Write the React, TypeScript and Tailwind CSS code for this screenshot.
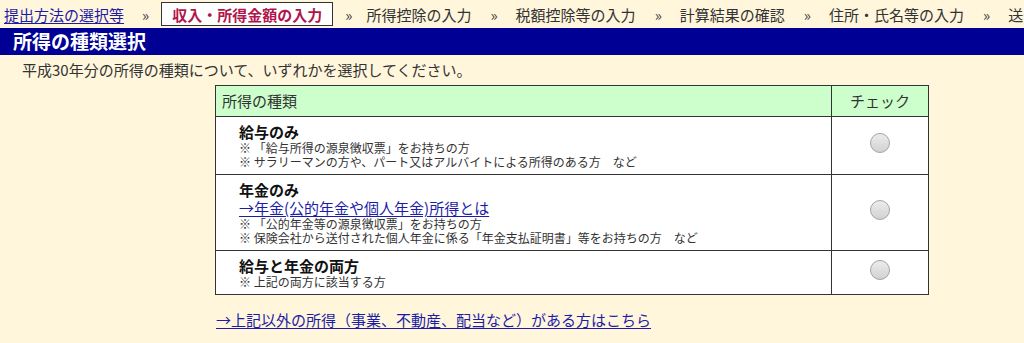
import React from "react";

const steps = ["所得控除の入力", "税額控除等の入力", "計算結果の確認", "住所・氏名等の入力", "送付"];

const rows = [
  {
    title: "給与のみ",
    link: "",
    notes: ["※ 「給与所得の源泉徴収票」をお持ちの方", "※ サラリーマンの方や、パート又はアルバイトによる所得のある方　など"],
  },
  {
    title: "年金のみ",
    link: "→年金(公的年金や個人年金)所得とは",
    notes: ["※ 「公的年金等の源泉徴収票」をお持ちの方", "※ 保険会社から送付された個人年金に係る「年金支払証明書」等をお持ちの方　など"],
  },
  {
    title: "給与と年金の両方",
    link: "",
    notes: ["※ 上記の両方に該当する方"],
  },
];

function Radio() {
  return (
    <span className="inline-block w-[20px] h-[20px] rounded-full border border-[#a4a4a4] bg-gradient-to-b from-[#ececec] to-[#d2d2d2]" />
  );
}

export default function App() {
  return (
    <div
      className="w-[1024px] h-[343px] overflow-hidden bg-[#fff6dc] text-[#222]"
      style={{ fontFamily: '"Noto Sans CJK JP", "Noto Sans", sans-serif' }}
    >
      {/* ステップ表示 */}
      <div className="h-[28px] flex items-center whitespace-nowrap text-[15px] leading-none">
        <a className="ml-[4px] text-[#1c1ca8] underline underline-offset-2">提出方法の選択等</a>
        <span className="ml-[18px] mr-[12px] text-[#444]">»</span>
        <span className="h-[24px] px-[10px] flex items-center bg-white border border-[#333] font-bold text-[#b0164b]">
          収入・所得金額の入力
        </span>
        {steps.map((s, i) => (
          <React.Fragment key={s}>
            <span className={i === 0 ? "ml-[12px] mr-[14px] text-[#444]" : "ml-[19px] mr-[18px] text-[#444]"}>»</span>
            <span className="text-[#333]">{s}</span>
          </React.Fragment>
        ))}
      </div>

      <div className="h-[27px] bg-[#000094] flex items-center pl-[13px] text-white font-bold text-[19px]">
        所得の種類選択
      </div>

      <p className="h-[30px] pt-[6px] pl-[22px] text-[15px] leading-[18px] text-[#333]">
        平成30年分の所得の種類について、いずれかを選択してください。
      </p>

      <table className="ml-[215px] w-[714px] border-collapse border border-[#333] bg-white">
        <thead>
          <tr className="h-[31px] bg-[#ccffcc] text-[15px] text-[#333]">
            <th className="border border-[#333] text-left font-normal pl-[6px]">所得の種類</th>
            <th className="border border-[#333] font-normal w-[97px]">チェック</th>
          </tr>
        </thead>
        <tbody>
          {rows.map((r) => (
            <tr key={r.title}>
              <td className="border border-[#333] pl-[23px] py-[5px]">
                <div className="font-bold text-[15px] leading-[19px] text-[#111]">{r.title}</div>
                {r.link && (
                  <a className="block text-[15px] leading-[18px] text-[#1c1ca8] underline underline-offset-2">{r.link}</a>
                )}
                {r.notes.map((n) => (
                  <div key={n} className="text-[12px] leading-[14px] text-[#333] whitespace-pre">
                    {n}
                  </div>
                ))}
              </td>
              <td className="border border-[#333] text-center align-middle">
                <Radio />
              </td>
            </tr>
          ))}
        </tbody>
      </table>

      <a className="block mt-[16px] ml-[216px] text-[15px] leading-[18px] text-[#1c1ca8] underline underline-offset-2">
        →上記以外の所得（事業、不動産、配当など）がある方はこちら
      </a>
    </div>
  );
}
